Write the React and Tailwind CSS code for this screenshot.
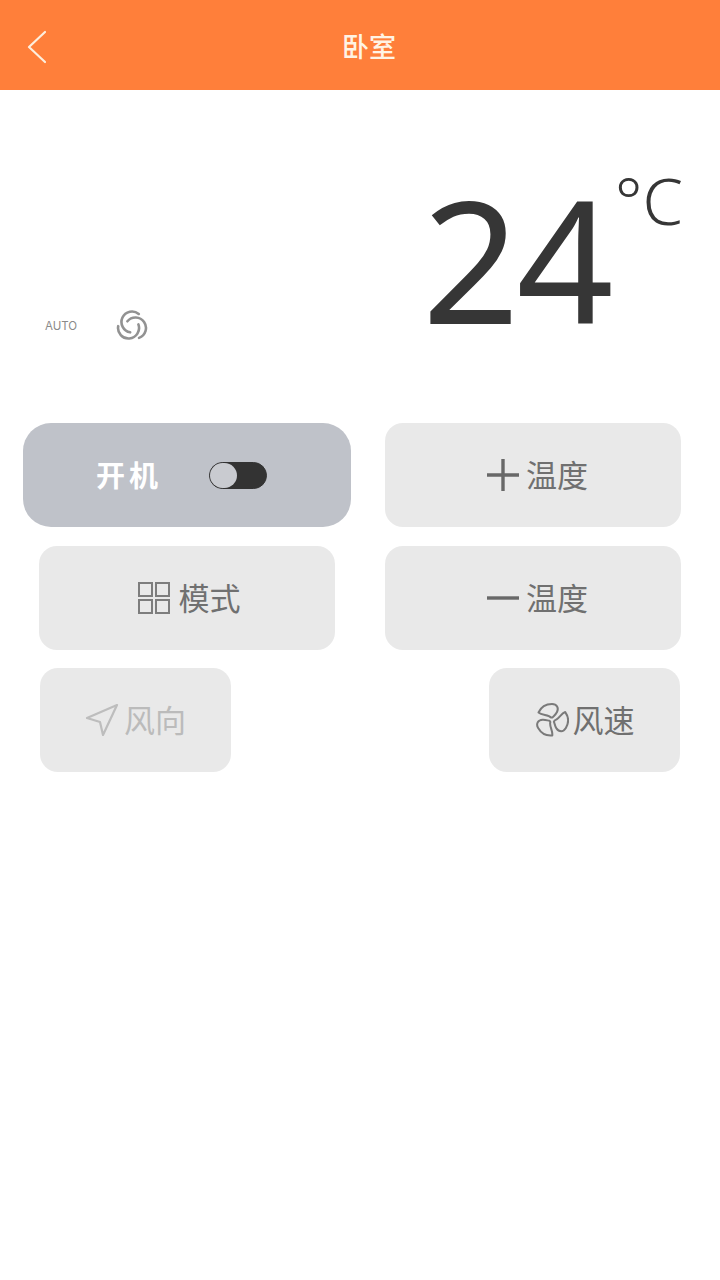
const cjk = { fontFamily: '"Noto Sans CJK SC", "Noto Sans", sans-serif' };

function Grid() {
  return (
    <svg width="34" height="34" viewBox="0 0 34 34" fill="none" stroke="#7d7d7d" strokeWidth="2">
      <rect x="2" y="2" width="13" height="13" />
      <rect x="19" y="2" width="13" height="13" />
      <rect x="2" y="19" width="13" height="13" />
      <rect x="19" y="19" width="13" height="13" />
    </svg>
  );
}

function Plane() {
  return (
    <svg width="34" height="34" viewBox="0 0 34 34" fill="none" stroke="#bdbdbd" strokeWidth="2.2" strokeLinejoin="round">
      <path d="M32 2 L2 15 L15 19 L18 32 Z" />
    </svg>
  );
}

function Fan() {
  const blade = "M16 14.5 C13.5 11.5 7 12.5 3.5 9.5 C6 4 11.5 1 17 1 C22 1 24 5 22 9 C20.5 12 18.5 13 17.5 14.5 Z";
  return (
    <svg width="34" height="34" viewBox="0 0 34 34" fill="none" stroke="#7a7a7a" strokeWidth="2" strokeLinejoin="round">
      <path d={blade} />
      <path d={blade} transform="rotate(120 17 17)" />
      <path d={blade} transform="rotate(240 17 17)" />
    </svg>
  );
}

function Swirl() {
  const arc = "M22.75 3.96 A10.5 10.5 0 1 0 14.18 22.34";
  return (
    <svg width="32" height="32" viewBox="0 0 32 32" fill="none" stroke="#929292" strokeWidth="2.6" strokeLinecap="round">
      <path d={arc} />
      <path d={arc} transform="rotate(120 16 16)" />
      <path d={arc} transform="rotate(240 16 16)" />
    </svg>
  );
}

function Btn({ className = "", text = "text-[#707070]", children, label }) {
  return (
    <div
      style={cjk}
      className={`h-[104px] rounded-[18px] bg-[#e9e9e9] flex items-center justify-center text-[31px] leading-none font-normal ${text} ${className}`}
    >
      {children}
      <span className="mb-[4px]">{label}</span>
    </div>
  );
}

export default function App() {
  return (
    <div className="w-[720px] h-[1280px] bg-white overflow-hidden">
      <header className="h-[90px] bg-[#ff7f3a] flex items-center pl-[26px] pr-[38px]">
        <svg width="20" height="34" viewBox="0 0 20 34" fill="none" stroke="#fdeedd" strokeWidth="2.2" strokeLinecap="round" strokeLinejoin="round" className="mt-[4px]">
          <path d="M19 2 L3 17 L19 32" />
        </svg>
        <h1 style={cjk} className="flex-1 text-center text-[27px] leading-none font-medium text-[#fff3e4] pl-[10px]">
          卧室
        </h1>
      </header>

      <section className="h-[333px] flex items-start justify-between pl-[45px] pr-[37px]">
        <div className="flex items-center mt-[220px] gap-[39px]">
          <span className="text-[11.5px] leading-none text-[#8a8a8a] mt-[1px]" style={{ fontFamily: '"Inter", sans-serif' }}>AUTO</span>
          <Swirl />
        </div>
        <div className="flex items-start text-[#363636]" style={{ fontFamily: '"Noto Sans", sans-serif' }}>
          <span className="text-[170px] leading-none tracking-[-3px] mt-[83px] font-normal">24</span>
          <span className="text-[65px] leading-none mt-[78px] ml-[4px] font-light">°C</span>
        </div>
      </section>

      <div className="flex flex-col pr-[39px]">
        <div className="flex justify-between pl-[23px] mb-[19px]">
          <div style={cjk} className="w-[328px] h-[104px] rounded-[28px] bg-[#bfc2c9] flex items-center pl-[73px] gap-[47px]">
            <span className="text-[29px] leading-none font-bold text-white tracking-[4px] mb-[2px]">开机</span>
            <span className="relative w-[58px] h-[27px] rounded-full bg-[#333333] border border-[#333333]">
              <span className="absolute left-0 top-0 w-[27px] h-[25px] rounded-full bg-[#c9cbd0]" />
            </span>
          </div>
          <Btn className="w-[296px] pl-[8px]" label="温度">
            <svg width="34" height="34" viewBox="0 0 34 34" stroke="#686868" strokeWidth="3.4" className="mr-[6px]"><path d="M1 17 H33 M17 1 V33" /></svg>
          </Btn>
        </div>
        <div className="flex justify-between pl-[39px] mb-[18px]">
          <Btn className="w-[296px] pl-[3px]" label="模式">
            <span className="mr-[8px] flex"><Grid /></span>
          </Btn>
          <Btn className="w-[296px] pl-[8px]" label="温度">
            <svg width="34" height="34" viewBox="0 0 34 34" stroke="#686868" strokeWidth="3.4" className="mr-[6px]"><path d="M1 17 H33" /></svg>
          </Btn>
        </div>
        <div className="flex justify-between pl-[40px] pr-[1px]">
          <Btn className="w-[191px]" text="text-[#bbbbbb]" label="风向">
            <span className="mr-[5px] flex"><Plane /></span>
          </Btn>
          <Btn className="w-[191px]" label="风速">
            <span className="mr-[4px] flex"><Fan /></span>
          </Btn>
        </div>
      </div>
    </div>
  );
}
